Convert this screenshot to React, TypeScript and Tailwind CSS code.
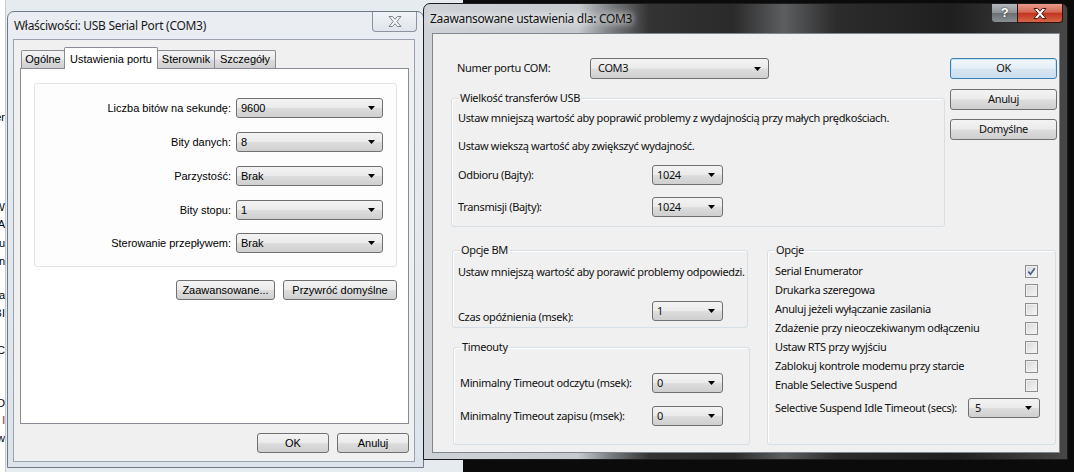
import React from 'react';

// wspólny wygląd przycisków i list rozwijanych (Win7)
const face = 'bg-[linear-gradient(#f3f3f3_0%,#ebebeb_48%,#dddddd_52%,#cfcfcf_100%)]';

const Arrow = () => (
  <svg width="7" height="4" viewBox="0 0 7 4" className="shrink-0">
    <path d="M0 0h7L3.5 4z" fill="#000" />
  </svg>
);

interface ComboProps {
  value: string;
  className?: string;
  pad?: string;
}

const Combo: React.FC<ComboProps> = ({ value, className = '', pad = 'pl-[4px]' }) => (
  <div
    className={`flex shrink-0 items-center justify-between rounded-[3px] border border-[#707070] ${face} ${pad} pr-[7px] ${className}`}
  >
    <span>{value}</span>
    <Arrow />
  </div>
);

const Btn: React.FC<{ children: React.ReactNode; className?: string; focused?: boolean }> = ({
  children,
  className = '',
  focused = false
}) => (
  <div
    className={`flex shrink-0 items-center justify-center rounded-[3px] border ${
      focused
        ? 'border-[#3c7fb1] bg-[linear-gradient(#f2f8fc_0%,#e5eff7_48%,#d8e6f1_52%,#cbdeee_100%)] shadow-[inset_0_0_0_1px_#c4e5f8]'
        : `border-[#707070] ${face}`
    } ${className}`}
  >
    {children}
  </div>
);

const Check: React.FC<{ checked?: boolean }> = ({ checked = false }) => (
  <div className="flex size-[13px] shrink-0 items-center justify-center border border-[#8e8f8f] bg-[linear-gradient(135deg,#d8d8d8,#f7f7f7)] shadow-[inset_0_0_0_1px_#efefef]">
    {checked && (
      <svg width="9" height="9" viewBox="0 0 9 9">
        <path d="M1.3 4.6 L3.5 7.2 L7.8 1.2" fill="none" stroke="#4a5f8c" strokeWidth="1.7" />
      </svg>
    )}
  </div>
);

const Group: React.FC<{ title: string; className?: string; children?: React.ReactNode }> = ({
  title,
  className = '',
  children
}) => (
  <div className={`relative shrink-0 rounded-[3px] border border-[#d5dfe5] shadow-[inset_1px_1px_0_#fff] ${className}`}>
    <span className="absolute left-[7px] top-[-9px] bg-[#f0f0f0] px-[1px] leading-[16px]">{title}</span>
    {children}
  </div>
);

// fragmenty okna w tle, przycięte z lewej
const Frag: React.FC<{ children: React.ReactNode; className?: string }> = ({ children, className = '' }) => (
  <div className={`flex h-[14px] shrink-0 justify-end whitespace-nowrap ${className}`}>
    <span>{children}</span>
  </div>
);

const XGlyph: React.FC<{ fill: string; stroke: string }> = ({ fill, stroke }) => (
  <svg width="14" height="11" viewBox="0 0 14 11">
    <path
      d="M1 0.5h3.6l2.4 2.8l2.4-2.8h3.6l-4.2 5l4.2 5h-3.6l-2.4-2.8l-2.4 2.8h-3.6l4.2-5z"
      fill={fill}
      stroke={stroke}
      strokeWidth="1"
      strokeLinejoin="round"
    />
  </svg>
);

const portRows = [
  { label: 'Liczba bitów na sekundę:', value: '9600', gap: 'mt-[14px]' },
  { label: 'Bity danych:', value: '8', gap: 'mt-[14px]' },
  { label: 'Parzystość:', value: 'Brak', gap: 'mt-[14px]' },
  { label: 'Bity stopu:', value: '1', gap: 'mt-[14px]' },
  { label: 'Sterowanie przepływem:', value: 'Brak', gap: 'mt-[13px]' }
];

const options = [
  { label: 'Serial Enumerator', checked: true },
  { label: 'Drukarka szeregowa' },
  { label: 'Anuluj jeżeli wyłączanie zasilania' },
  { label: 'Zdażenie przy nieoczekiwanym odłączeniu' },
  { label: 'Ustaw RTS przy wyjściu' },
  { label: 'Zablokuj kontrole modemu przy starcie' },
  { label: 'Enable Selective Suspend' }
];

// okno właściwości portu
const PortDialog = () => (
  <div className="absolute left-[7px] top-[11px] flex h-[457px] w-[417px] flex-col rounded-t-[7px] border border-[#6f7a86] bg-[linear-gradient(#eaeef3,#dde3ea)] pb-[5px] pl-[5px] pr-[8px] font-['Liberation_Sans',sans-serif] text-[11px] text-black">
    <div className="relative flex h-[27px] shrink-0 items-center pl-[1px] font-['Noto_Sans',sans-serif] text-[12px] tracking-[-0.3px] text-[#1a1a1a]">
      Właściwości: USB Serial Port (COM3)
      <div className="absolute right-[-2px] top-0 flex h-[20px] w-[45px] items-center justify-center rounded-b-[4px] border border-t-0 border-[#8a949e] bg-[linear-gradient(#f1f4f7,#dfe5eb)]">
        <XGlyph fill="#f6f7f8" stroke="#7c838c" />
      </div>
    </div>
    <div className="flex flex-1 flex-col border border-[#9aa3ad] bg-[#f0f0f0] pl-[6px] pr-[5px]">
      <div className="flex h-[28px] shrink-0 items-end pl-[1px]">
        <div className={`flex h-[18px] w-[44px] items-center justify-center rounded-t-[2px] border border-b-0 border-[#898c95] ${face}`}>
          Ogólne
        </div>
        <div className="relative z-10 -mb-[1px] -ml-[1px] flex h-[22px] w-[94px] items-start justify-center rounded-t-[2px] border border-b-0 border-[#898c95] bg-white pt-[3px]">
          Ustawienia portu
        </div>
        <div className={`-ml-[1px] flex h-[18px] w-[58px] items-center justify-center rounded-t-[2px] border border-b-0 border-[#898c95] ${face}`}>
          Sterownik
        </div>
        <div className={`-ml-[1px] flex h-[18px] w-[62px] items-center justify-center rounded-t-[2px] border border-b-0 border-[#898c95] ${face}`}>
          Szczegóły
        </div>
      </div>
      <div className="flex h-[356px] w-[389px] shrink-0 flex-col border border-[#898c95] bg-white">
        <div className="ml-[13px] mt-[14px] flex h-[184px] w-[363px] flex-col rounded-[3px] border border-[#dfe3e8] bg-[#fdfdfd]">
          {portRows.map(row => (
            <div key={row.label} className={`flex h-[20px] items-center ${row.gap}`}>
              <span className="w-[196px] text-right">{row.label}</span>
              <Combo value={row.value} className="ml-[5px] h-[20px] w-[147px]" />
            </div>
          ))}
        </div>
        <div className="mt-[13px] flex justify-end gap-[8px] pr-[11px]">
          <Btn className="h-[20px] w-[99px]">Zaawansowane...</Btn>
          <Btn className="h-[20px] w-[114px]">Przywróć domyślne</Btn>
        </div>
      </div>
      <div className="mt-[9px] flex justify-end gap-[8px]">
        <Btn className="h-[20px] w-[72px]">OK</Btn>
        <Btn className="h-[20px] w-[72px]">Anuluj</Btn>
      </div>
    </div>
  </div>
);

// okno ustawień zaawansowanych
const AdvancedDialog = () => (
  <div className="absolute left-[423px] top-[3px] flex h-[457px] w-[645px] flex-col rounded-t-[7px] border border-[#1c1c1c] bg-[linear-gradient(90deg,#cfd3d7_0%,#c6cace_24%,#7a7d80_29%,#333_35%,#2a2a2a_48%,#5c5e60_56%,#2c2c2c_64%,#1f1f1f_82%,#474747_100%)] pb-[6px] pl-[8px] pr-[7px] font-['Noto_Sans',sans-serif] text-[11px] tracking-[-0.35px] text-[#111]">
    <div className="relative flex h-[29px] shrink-0 items-center text-[12px] tracking-[-0.3px] [text-shadow:0_0_6px_#fff,0_0_10px_#fff]">
      <span className="-ml-[2px]">Zaawansowane ustawienia dla: COM3</span>
      <div className="absolute right-[-3px] top-0 flex h-[19px]">
        <div className="flex w-[27px] items-center justify-center rounded-bl-[4px] border border-t-0 border-[#2b2b2b] bg-[linear-gradient(#b4b9be_0%,#8e9398_48%,#6b7075_52%,#8a8f94_100%)] font-['Liberation_Sans',sans-serif] text-[13px] font-bold text-white [text-shadow:0_0_2px_#222]">
          ?
        </div>
        <div className="-ml-[1px] flex w-[46px] items-center justify-center rounded-br-[4px] border border-t-0 border-[#3a0f0a] bg-[linear-gradient(#e79b8c_0%,#d66a56_45%,#c2341f_52%,#d5674a_100%)]">
          <XGlyph fill="#ffffff" stroke="#4a1a12" />
        </div>
      </div>
    </div>
    <div className="flex flex-1 flex-col whitespace-nowrap border border-[#7e8790] bg-[#f0f0f0]">
      <div className="flex">
        <div className="ml-[18px] w-[494px]">
          <div className="mt-[24px] flex h-[21px] items-center">
            <span className="ml-[6px] w-[133px]">Numer portu COM:</span>
            <Combo value="COM3" pad="pl-[7px]" className="h-[21px] w-[179px]" />
          </div>
          <Group title="Wielkość transferów USB" className="mt-[19px] h-[129px] pl-[6px] pt-[11px]">
            <div className="leading-[16px]">
              Ustaw mniejszą wartość aby poprawić problemy z wydajnością przy małych prędkościach.
            </div>
            <div className="mt-[12px] leading-[16px]">Ustaw wiekszą wartość aby zwiększyć wydajność.</div>
            <div className="mt-[11px] flex h-[20px] items-center">
              <span className="w-[194px]">Odbioru (Bajty):</span>
              <Combo value="1024" className="h-[20px] w-[71px]" />
            </div>
            <div className="mt-[12px] flex h-[20px] items-center">
              <span className="w-[194px]">Transmisji (Bajty):</span>
              <Combo value="1024" className="h-[20px] w-[71px]" />
            </div>
          </Group>
        </div>
        <div className="ml-[5px] mt-[24px] flex w-[107px] flex-col">
          <Btn focused className="h-[21px]">OK</Btn>
          <Btn className="mt-[10px] h-[21px]">Anuluj</Btn>
          <Btn className="mt-[9px] h-[21px]">Domyślne</Btn>
        </div>
      </div>
      <div className="mt-[23px] flex items-start">
        <div className="ml-[19px] w-[298px]">
          <Group title="Opcje BM" className="h-[78px] w-[296px] pl-[5px] pt-[13px]">
            <div className="leading-[16px]">Ustaw mniejszą wartość aby porawić problemy odpowiedzi.</div>
            <div className="mt-[21px] flex h-[20px] items-start">
              <span className="mt-[8px] w-[194px] leading-[16px]">Czas opóźnienia (msek):</span>
              <Combo value="1" className="h-[20px] w-[71px]" />
            </div>
          </Group>
          <Group title="Timeouty" className="ml-[1px] mt-[19px] h-[98px] w-[297px] pl-[6px] pt-[25px]">
            <div className="flex h-[20px] items-center">
              <span className="w-[192px]">Minimalny Timeout odczytu (msek):</span>
              <Combo value="0" className="h-[20px] w-[71px]" />
            </div>
            <div className="mt-[13px] flex h-[20px] items-center">
              <span className="w-[192px]">Minimalny Timeout zapisu (msek):</span>
              <Combo value="0" className="h-[20px] w-[71px]" />
            </div>
          </Group>
        </div>
        <Group title="Opcje" className="ml-[17px] h-[195px] w-[289px] pl-[7px] pt-[11px]">
          {options.map(opt => (
            <div key={opt.label} className="flex h-[19px] items-center">
              <span className="w-[250px]">{opt.label}</span>
              <Check checked={opt.checked} />
            </div>
          ))}
          <div className="mt-[3px] flex h-[20px] items-center">
            <span className="w-[193px]">Selective Suspend Idle Timeout (secs):</span>
            <Combo value="5" pad="pl-[6px]" className="h-[20px] w-[72px]" />
          </div>
        </Group>
      </div>
    </div>
  </div>
);

export default function App() {
  return (
    <div className="relative h-[472px] w-[1074px] overflow-hidden bg-[#0b0b0b]">
      {/* okno w tle */}
      <div className="absolute left-0 top-0 h-full w-[463px] bg-[#e6ebf0]" />
      <div className="absolute left-0 top-0 flex h-full w-[6px] flex-col overflow-hidden border-r border-[#c8ccd1] bg-white font-['Liberation_Sans',sans-serif] text-[11px] leading-[14px] text-black">
        <Frag className="mt-[110px]">Ser</Frag>
        <Frag className="mt-[76px]">W</Frag>
        <Frag className="mt-[3px]">A</Frag>
        <Frag className="mt-[5px]">u</Frag>
        <Frag className="mt-[4px]">n</Frag>
        <Frag className="mt-[20px]">ia</Frag>
        <Frag className="mt-[4px]">BI</Frag>
        <Frag className="mt-[23px]">C</Frag>
        <Frag className="mt-[39px]">O</Frag>
        <Frag className="mt-[3px] text-[#a01010]">l</Frag>
        <Frag className="mt-[4px]">w</Frag>
      </div>
      <PortDialog />
      <AdvancedDialog />
    </div>
  );
}
